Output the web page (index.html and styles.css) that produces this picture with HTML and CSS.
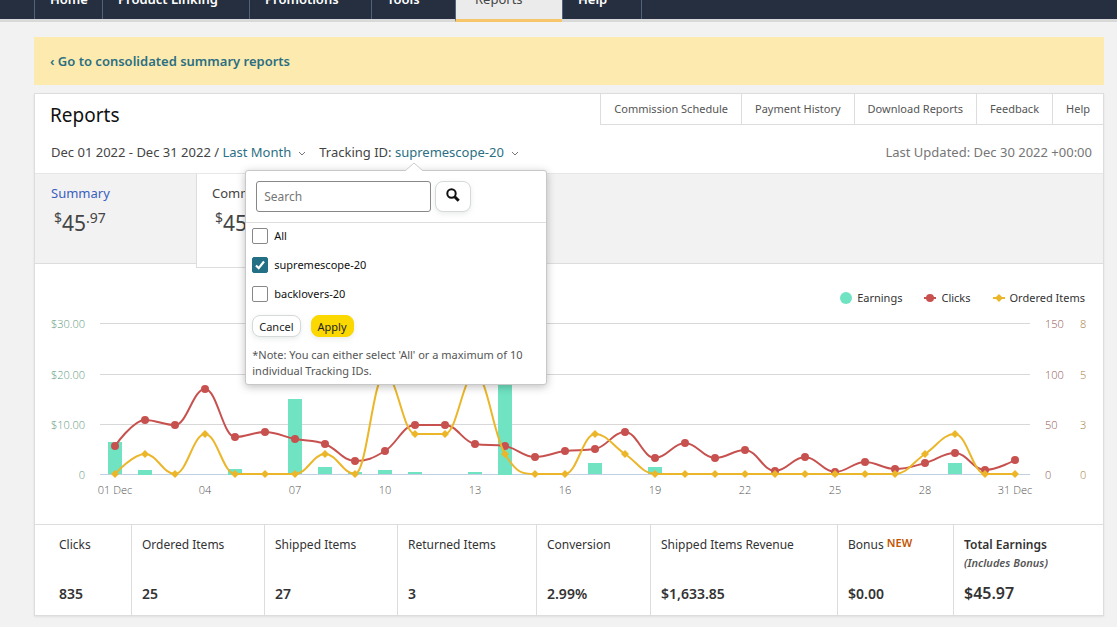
FILE: index.html
```html
<!DOCTYPE html>
<html lang="en">
<head>
  <meta charset="utf-8">
  <title>Reports</title>
  <link rel="stylesheet" href="styles.css">
</head>
<body>

<nav class="top-nav">
  <a href="#" class="nav-home">Home</a>
  <a href="#" class="nav-linking">Product Linking</a>
  <a href="#" class="nav-promotions">Promotions</a>
  <a href="#" class="nav-tools">Tools</a>
  <a href="#" class="nav-reports active">Reports</a>
  <a href="#" class="nav-help">Help</a>
</nav>

<main>
  <div class="banner"><a href="#">‹ Go to consolidated summary reports</a></div>

  <section class="card">
    <div class="card-head">
      <h1>Reports</h1>
      <div class="links">
        <a href="#">Commission Schedule</a>
        <a href="#">Payment History</a>
        <a href="#">Download Reports</a>
        <a href="#">Feedback</a>
        <a href="#">Help</a>
      </div>
    </div>

    <div class="filters">
      <div class="dates">Dec 01 2022 - Dec 31 2022 /
        <button class="picker">Last Month<svg class="chevron" viewBox="0 0 8 6"><path d="M1 1l3 3 3-3"/></svg></button>
      </div>
      <div class="tracking">Tracking ID:
        <button class="picker">supremescope-20<svg class="chevron" viewBox="0 0 8 6"><path d="M1 1l3 3 3-3"/></svg></button>

        <!-- Tracking ID popup -->
        <form class="popup">
          <svg class="arrow" viewBox="0 0 18 9"><path d="M0 9L9 1l9 8"/></svg>
          <div class="search-row">
            <input type="text" placeholder="Search" aria-label="Search">
            <button type="button" class="search-button" aria-label="Search">
              <svg viewBox="0 0 14 14"><circle cx="5.5" cy="5.5" r="4.2"/><path d="M8.7 8.7l4 4"/></svg>
            </button>
          </div>
          <div class="options">
            <label><input type="checkbox"> All</label>
            <label><input type="checkbox" checked> supremescope-20</label>
            <label><input type="checkbox"> backlovers-20</label>
            <div class="buttons">
              <button type="button">Cancel</button>
              <button type="button" class="apply">Apply</button>
            </div>
            <p>*Note: You can either select 'All' or a maximum of 10 individual Tracking IDs.</p>
          </div>
        </form>
      </div>
      <div class="updated">Last Updated: Dec 30 2022 +00:00</div>
    </div>

    <div class="tabs">
      <a href="#" class="tab">
        <span class="tab-name">Summary</span>
        <span class="amount"><sup>$</sup>45<sup>.97</sup></span>
      </a>
      <a href="#" class="tab selected">
        <span class="tab-name">Commissions</span>
        <span class="amount"><sup>$</sup>45<sup>.97</sup></span>
      </a>
    </div>

    <div class="legend">
      <span><svg class="dot" viewBox="0 0 12 12"><circle cx="6" cy="6" r="6"/></svg>Earnings</span>
      <span><svg class="mark red" viewBox="0 0 12 8"><path d="M0 4h12"/><circle cx="6" cy="4" r="4"/></svg>Clicks</span>
      <span><svg class="mark gold" viewBox="0 0 12 8"><path d="M0 4h12"/><path d="M6 0l4 4-4 4-4-4z"/></svg>Ordered Items</span>
    </div>
    <svg id="chart" class="chart" viewBox="0 0 1068 216"></svg>

    <table class="totals">
      <thead>
        <tr>
          <th>Clicks</th>
          <th>Ordered Items</th>
          <th>Shipped Items</th>
          <th>Returned Items</th>
          <th>Conversion</th>
          <th>Shipped Items Revenue</th>
          <th>Bonus <span class="new">NEW</span></th>
          <th class="total">Total Earnings <em>(Includes Bonus)</em></th>
        </tr>
      </thead>
      <tbody>
        <tr>
          <td>835</td>
          <td>25</td>
          <td>27</td>
          <td>3</td>
          <td>2.99%</td>
          <td>$1,633.85</td>
          <td>$0.00</td>
          <td class="total">$45.97</td>
        </tr>
      </tbody>
    </table>
  </section>
</main>

<script src="chart.js"></script>
</body>
</html>
```
FILE: styles.css
```css
body {
  margin: 0;
  background-color: #f2f2f2;
  color: #444;
  font-family: "Noto Sans", "Open Sans", sans-serif;
  font-size: 12px;
  line-height: 16px;
}

a {
  color: inherit;
  text-decoration: none;
}

button, input {
  font-family: inherit;
  font-size: 12px;
}

/* Top navigation */
.top-nav {
  display: flex;
  height: 19px;
  background-color: #252f3f;
  border-bottom: 3px solid #d9d9d9;
  padding-left: 34px;
}

.top-nav a {
  box-sizing: border-box;
  height: 40px;
  margin-top: -18px;
  padding: 8px 0 0 15px;
  border-left: 1px solid #51627c;
  color: white;
  font-size: 13px;
  font-weight: 600;
  line-height: 18px;
}

.nav-home { width: 68px; }
.nav-linking { width: 147px; }
.nav-promotions { width: 122px; }
.nav-tools { width: 84px; }
.nav-reports { width: 107px; }
.nav-help { width: 80px; }

.top-nav a:not(.active) {
  height: 37px;
}

.top-nav .nav-help {
  border-right: 1px solid #51627c;
}

.top-nav .active {
  padding-left: 19px;
  border-bottom: 3px solid #f7c66b;
  background-color: #ebebeb;
  color: #444;
  font-weight: 400;
}

main {
  margin: 15px 13px 12px 34px;
}

.banner {
  padding: 16px;
  background-color: #fdeaaf;
  color: #2b6f82;
  font-size: 13px;
  font-weight: 600;
}

.card {
  margin-top: 8px;
  border: 1px solid #ddd;
  background-color: white;
  box-shadow: 0 1px 2px rgba(0,0,0,0.08);
}

.card-head {
  display: flex;
  justify-content: space-between;
  align-items: flex-start;
  height: 43px;
}

h1 {
  margin: 9px 0 0 15px;
  color: #111;
  font-size: 19px;
  font-weight: 400;
  line-height: 24px;
}

.links {
  display: flex;
  border-bottom: 1px solid #ddd;
}

.links a {
  padding: 7px 13px;
  border-left: 1px solid #ddd;
  color: #555;
  font-size: 11px;
}

.filters {
  display: flex;
  gap: 13px;
  height: 36px;
  padding: 0 11px 0 16px;
  font-size: 13px;
  line-height: 30px;
}

.picker {
  padding: 0;
  border: none;
  background: none;
  color: #2b6f82;
  font-size: 13px;
  cursor: pointer;
}

.chevron {
  width: 8px;
  height: 6px;
  margin-left: 7px;
  fill: none;
  stroke: #777;
}

.updated {
  margin-left: auto;
  color: #767676;
}

/* Popup */
.tracking {
  position: relative;
}

.popup {
  position: absolute;
  z-index: 2;
  top: 33px;
  left: -74px;
  width: 300px;
  border: 1px solid #c8c8c8;
  border-radius: 3px;
  background-color: white;
  box-shadow: 0 2px 8px rgba(0,0,0,0.25);
  line-height: 16px;
}

.arrow {
  position: absolute;
  top: -9px;
  left: 159px;
  width: 18px;
  height: 9px;
  fill: white;
  stroke: #ccc;
}

.search-row {
  display: flex;
  gap: 4px;
  padding: 10px;
  border-bottom: 1px solid #ddd;
}

.search-row input {
  box-sizing: border-box;
  width: 175px;
  height: 31px;
  padding: 0 7px;
  border: 1px solid #888;
  border-radius: 3px;
}

.search-row input::placeholder {
  color: #767676;
}

.search-button {
  width: 36px;
  height: 31px;
  padding: 0;
  border: 1px solid #d5d9d9;
  border-radius: 8px;
  background-color: white;
  box-shadow: 0 2px 5px rgba(213,217,217,0.5);
}

.search-button svg {
  width: 14px;
  height: 14px;
  fill: none;
  stroke: #111;
  stroke-width: 2;
}

.search-button path {
  stroke-width: 3;
}

.options {
  padding: 5px 5px 5px 6px;
}

.options label {
  display: flex;
  align-items: center;
  gap: 6px;
  height: 16px;
  margin-bottom: 13px;
  color: #111;
  font-size: 11px;
}

.options input {
  box-sizing: border-box;
  width: 16px;
  height: 16px;
  margin: 0;
  border: 1px solid #888;
  border-radius: 2px;
  background-color: white;
  appearance: none;
}

.options input:checked {
  border-color: #226f86;
  background: #226f86 url("data:image/svg+xml,%3Csvg xmlns='http://www.w3.org/2000/svg' viewBox='0 0 14 14'%3E%3Cpath d='M3 7.5l2.7 2.7L11 3.5' fill='none' stroke='white' stroke-width='2.2'/%3E%3C/svg%3E");
}

.buttons {
  display: flex;
  gap: 10px;
}

.buttons button {
  height: 22px;
  padding: 0 6px;
  border: 1px solid #d5d9d9;
  border-radius: 8px;
  background-color: white;
  box-shadow: 0 2px 5px rgba(213,217,217,0.5);
  color: #222;
  font-size: 11px;
}

.buttons .apply {
  border-color: #fad800;
  background-color: #fad800;
}

.options p {
  margin: 10px 0 0;
  color: #555;
  font-size: 11px;
}

/* Tabs */
.tabs {
  display: flex;
  height: 89px;
  border-top: 1px solid #e7e7e7;
  border-bottom: 1px solid #ddd;
  background-color: #f2f2f2;
}

.tab {
  box-sizing: border-box;
  width: 162px;
  padding: 9px 14px 0 16px;
}

.tab-name {
  display: block;
  color: #3a60bf;
  font-size: 13px;
  line-height: 20px;
}

.tab.selected {
  height: 94px;
  margin-left: -1px;
  padding-left: 15px;
  border: 1px solid #ddd;
  border-top: none;
  background-color: white;
}

.selected .tab-name {
  color: #444;
}

.amount {
  display: flex;
  padding: 6px 0 0 3px;
  font-size: 21px;
  line-height: 28px;
}

.amount sup {
  font-size: 14px;
  line-height: 18px;
}

/* Chart */
.legend {
  display: flex;
  justify-content: flex-end;
  gap: 22px;
  padding: 26px 18px 2px;
}

.legend span {
  display: flex;
  align-items: center;
  gap: 5px;
  color: #333;
  font-size: 11px;
}

.dot {
  width: 12px;
  height: 12px;
  fill: #70e3c2;
}

.mark {
  width: 12px;
  height: 8px;
  stroke-width: 2;
}

.red { fill: #c7514f; stroke: #c7514f; }
.gold { fill: #ebb62a; stroke: #ebb62a; }
.mark circle, .mark path + path { stroke: none; }

.chart {
  display: block;
  width: 100%;
  font-family: "Open Sans", "Noto Sans", sans-serif;
  font-size: 11px;
  font-weight: 300;
}

.grid { stroke: #d8d8d8; }
.base { stroke: #c0d0e0; }
.bar { fill: #70e3c2; }
.line { fill: none; stroke-width: 2; }
.line-red { stroke: #c7514f; }
.line-gold { stroke: #ebb62a; }
.point-red { fill: #c7514f; }
.point-gold { fill: #ebb62a; }
.label { fill: #555; text-anchor: middle; }
.money { fill: #5f9a7e; text-anchor: end; }
.clicks { fill: #8f5654; }
.orders { fill: #a87d40; }

/* Totals */
.totals {
  display: block;
  border-top: 1px solid #ddd;
  color: #333;
}

.totals thead, .totals tbody {
  display: block;
}

.totals tr {
  display: grid;
  grid-template-columns: 97fr 133fr 133fr 139fr 114fr 187fr 116fr 149fr;
}

.totals th, .totals td {
  padding: 0 10px;
  border-right: 1px solid #ddd;
  text-align: left;
}

.totals th {
  height: 39px;
  padding-top: 11px;
  font-weight: 400;
  line-height: 18px;
}

.totals td {
  height: 29px;
  padding-top: 11px;
  font-size: 14px;
  font-weight: 600;
}

.totals th:first-child, .totals td:first-child {
  padding-left: 24px;
}

.totals .total {
  border-right: none;
  font-weight: 600;
}

.totals td.total {
  padding-top: 10px;
  font-size: 16px;
}

.totals em {
  display: block;
  color: #555;
  font-size: 11px;
}

.new {
  color: #c45500;
  font-size: 11px;
  font-weight: 600;
  line-height: 12px;
  vertical-align: 2px;
}
```
FILE: chart.js
```js
const earnings = [6.4, 0.9, 0, 0, 1.1, 0, 15, 1.4, 0.4, 0.8, 0.4, 0, 0.4, 18.5, 0, 0, 2.2, 0, 1.4, 0, 0, 0, 0, 0, 0, 0, 0, 0, 2.2, 0, 0];
const clicks = [28, 54, 49, 85, 37, 42, 35, 30, 13, 23, 49, 49, 30, 28, 17, 23, 25, 42, 16, 31, 16, 24, 3, 17, 2, 12, 5, 11, 21, 4, 14];
const orders = [0, 1, 0, 2, 0, 0, 0, 1, 0, 5, 2, 2, 5, 1, 0, 0, 2, 1, 0, 0, 0, 0, 0, 0, 0, 0, 0, 1, 2, 0, 0];

const baseY = 166;
const xAt = i => 80 + i * 30;
const toPoints = (values, unit) => values.map((v, i) => [xAt(i), baseY - v * unit]);

// smooth line that never goes past a peak or a low
function spline(pts) {
  let path = `M${pts[0]}`;
  let right = pts[0];
  for (let i = 1; i < pts.length; i++) {
    const [x, y] = pts[i];
    const last = pts[i - 1];
    const next = pts[i + 1];
    let left = [x, y];
    let newRight = [x, y];
    if (next) {
      let slope = (next[1] - last[1]) / (next[0] - last[0]);
      const dx = 12;
      let ly = y - slope * dx;
      const lo = Math.min(last[1], y), hi = Math.max(last[1], y);
      ly = Math.max(lo, Math.min(hi, ly));
      let ry = 2 * y - ly;
      const lo2 = Math.min(next[1], y), hi2 = Math.max(next[1], y);
      if (ry < lo2 || ry > hi2) {
        ry = Math.max(lo2, Math.min(hi2, ry));
        ly = 2 * y - ry;
      }
      left = [x - dx, ly];
      newRight = [x + dx, ry];
    }
    path += `C${right} ${left} ${x},${y}`;
    right = newRight;
  }
  return path;
}

let svg = '';

['$30.00', '$20.00', '$10.00', '0'].forEach((money, i) => {
  const y = [15.5, 66.5, 116.5, 166.5][i];
  svg += `<path class="${i === 3 ? 'base' : 'grid'}" d="M65 ${y}H995"/>`;
  svg += `<text class="money" x="50" y="${y + 4}">${money}</text>`;
  svg += `<text class="clicks" x="1010" y="${y + 4}">${150 - i * 50}</text>`;
  svg += `<text class="orders" x="1045" y="${y + 4}">${[8, 5, 3, 0][i]}</text>`;
});

earnings.forEach((v, i) => {
  if (v) svg += `<rect class="bar" x="${xAt(i) - 7}" y="${Math.round(baseY - v * 5)}" width="14" height="${Math.round(v * 5)}"/>`;
});

const clickPoints = toPoints(clicks, 1);
svg += `<path class="line line-red" d="${spline(clickPoints)}"/>`;
clickPoints.forEach(([x, y]) => svg += `<circle class="point-red" cx="${x}" cy="${y}" r="4"/>`);

const orderPoints = toPoints(orders, 20);
svg += `<path class="line line-gold" d="${spline(orderPoints)}"/>`;
orderPoints.forEach(([x, y]) => svg += `<path class="point-gold" d="M${x} ${y - 4}l4 4-4 4-4-4z"/>`);

['01 Dec', '04', '07', '10', '13', '16', '19', '22', '25', '28', '31 Dec'].forEach((text, i) => {
  svg += `<text class="label" x="${xAt(i * 3)}" y="186">${text}</text>`;
});

document.getElementById('chart').innerHTML = svg;
```
